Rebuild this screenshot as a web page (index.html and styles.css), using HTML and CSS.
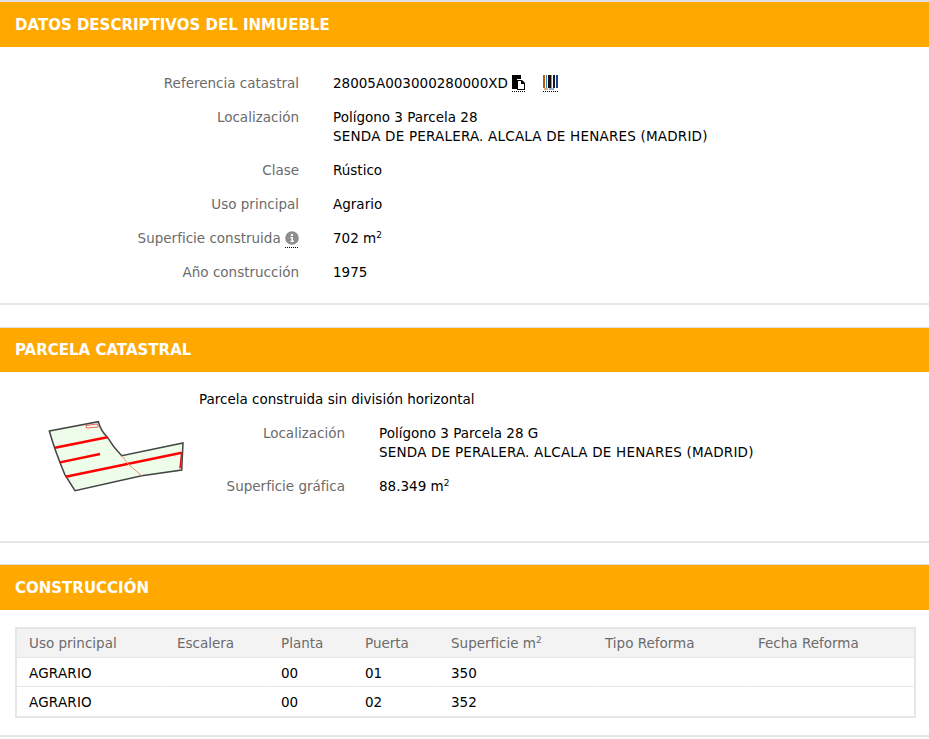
FILE: index.html
```html
<!DOCTYPE html>
<html lang="es">
<head>
    <meta charset="UTF-8">
    <title>Datos descriptivos del inmueble</title>
    <link rel="stylesheet" href="styles.css">
</head>
<body>
    <section class="panel panel-datos">
        <h2 class="panel-title">DATOS DESCRIPTIVOS DEL INMUEBLE</h2>
        <div class="datos-body">
            <div class="row">
                <div class="label">Referencia catastral</div>
                <div class="value">28005A003000280000XD<span class="ref-icons">
                    <svg width="15" height="19" viewBox="0 0 15 19">
                        <path d="M1 1h9v4H6v10H1z" fill="#000"/>
                        <path d="M6 6h5l3 3v7H6z" fill="#000"/>
                        <path d="M7 7h3v3h3v5H7z" fill="#fff"/>
                        <path d="M1 17.5h14" stroke="#000" stroke-dasharray="1 1"/>
                    </svg>
                    <svg width="15" height="19" viewBox="0 0 15 19">
                        <path d="M0 1h2v13H0z" fill="#b85a00"/>
                        <path d="M3 1h1v13H3z" fill="#2a7fd0"/>
                        <path d="M5 1h3v13H5z" fill="#1a1010"/>
                        <path d="M8 1h1v13H8z" fill="#d88a1e"/>
                        <path d="M10 1h2v13h-2z" fill="#10182a"/>
                        <path d="M13 1h2v13h-2z" fill="#1a3f90"/>
                        <path d="M1 15h4" stroke="#b85a00"/>
                        <path d="M6 15h5" stroke="#2a5fa0"/>
                        <path d="M0 17.5h15" stroke="#000" stroke-dasharray="1 1"/>
                    </svg>
                </span></div>
            </div>
            <div class="row">
                <div class="label">Localización</div>
                <div class="value">Polígono 3 Parcela 28<br><span class="caps">SENDA DE PERALERA. ALCALA DE HENARES (MADRID)</span></div>
            </div>
            <div class="row">
                <div class="label">Clase</div>
                <div class="value">Rústico</div>
            </div>
            <div class="row">
                <div class="label">Uso principal</div>
                <div class="value">Agrario</div>
            </div>
            <div class="row">
                <div class="label">Superficie construida <svg class="info" width="14" height="19" viewBox="0 0 14 19">
                    <circle cx="7" cy="9" r="6.8" fill="#8e8e8e"/>
                    <path d="M6 5h2v2H6zM5.5 8H8v3.5h1V13H5.5v-1.500h1V9.500h-1z" fill="#fff"/>
                    <path d="M0 18.500h14" stroke="#000" stroke-dasharray="1 1"/>
                </svg></div>
                <div class="value">702 m<sup>2</sup></div>
            </div>
            <div class="row">
                <div class="label">Año construcción</div>
                <div class="value">1975</div>
            </div>
        </div>
    </section>

    <section class="panel panel-parcela">
        <h2 class="panel-title">PARCELA CATASTRAL</h2>
        <div class="parcela-body">
            <svg class="plano" width="140" height="76" viewBox="0 0 140 76">
                <path d="M2.300 12 51.300 2.700 Q54 12 60 17.700 Q66 28 74.700 36.700 L136 24 134.700 51 94.700 56.700 28 71.700 18 56 Q8 32 2.300 12z" fill="#eefde9" stroke="#444" stroke-width="1.500"/>
                <path d="M8 28.700 60.300 18.300M13 43.300 53 35M18.700 57.700 134.700 33.700" stroke="#f00" stroke-width="2.400" fill="none"/>
                <path d="M74.700 36.700 81 45 94.700 56.700" stroke="#f08a80" fill="none"/>
                <path d="M134.700 33.700 133 49.300" stroke="#e01010" stroke-width="1.500" fill="none"/>
                <path d="M39 6.500 50.500 5 51.300 8 39.500 9z" fill="none" stroke="#f06060"/>
            </svg>
            <div class="parcela-info">
                <p class="parcela-tipo">Parcela construida sin división horizontal</p>
                <div class="row">
                    <div class="label">Localización</div>
                    <div class="value">Polígono 3 Parcela 28 G<br><span class="caps">SENDA DE PERALERA. ALCALA DE HENARES (MADRID)</span></div>
                </div>
                <div class="row">
                    <div class="label">Superficie gráfica</div>
                    <div class="value">88.349 m<sup>2</sup></div>
                </div>
            </div>
        </div>
    </section>

    <section class="panel panel-construccion">
        <h2 class="panel-title">CONSTRUCCIÓN</h2>
        <div class="construccion-body">
            <table class="tabla">
                <thead>
                    <tr>
                        <th class="c-uso">Uso principal</th>
                        <th class="c-esc">Escalera</th>
                        <th class="c-pla">Planta</th>
                        <th class="c-pue">Puerta</th>
                        <th class="c-sup">Superficie m<sup>2</sup></th>
                        <th class="c-tip">Tipo Reforma</th>
                        <th>Fecha Reforma</th>
                    </tr>
                </thead>
                <tbody>
                    <tr><td class="caps">AGRARIO</td><td></td><td>00</td><td>01</td><td>350</td><td></td><td></td></tr>
                    <tr><td class="caps">AGRARIO</td><td></td><td>00</td><td>02</td><td>352</td><td></td><td></td></tr>
                </tbody>
            </table>
        </div>
    </section>
</body>
</html>
```

FILE: styles.css
```css
body {
    margin: 0;
    background: #fff;
    color: #000;
    font-family: "DejaVu Sans", Verdana, sans-serif;
    font-size: 13.5px;
    line-height: 19px;
    overflow: hidden;
}
.panel {
    border-bottom: 2px solid #e6e6e6;
}
.panel-datos {
    margin-bottom: 22px;
}
.panel-parcela {
    margin-bottom: 21px;
}
.panel-title {
    margin: 0;
    height: 45px;
    padding-left: 15px;
    border-top: 1px solid #e0e0e0;
    background: #ffa800;
    color: #fff;
    font-size: 15px;
    font-weight: bold;
    line-height: 47px;
}
.panel-datos .panel-title {
    border-top-width: 2px;
}
.panel-parcela .panel-title {
    height: 44px;
    line-height: 44px;
}
.row {
    display: flex;
    margin-bottom: 15px;
}
.label {
    text-align: right;
    color: #6b6b6b;
}
.value {
    margin-left: 34px;
}
.caps {
    letter-spacing: 0.2px;
}
sup {
    font-size: 9px;
    line-height: 0;
}
.datos-body {
    padding: 27px 0 6px;
}
.datos-body .label {
    width: 299px;
}
.ref-icons {
    display: inline-flex;
    vertical-align: top;
    gap: 17px;
    margin-left: 3px;
}
.info {
    vertical-align: top;
}
.parcela-body {
    display: flex;
    padding: 18px 0 30px;
}
.plano {
    margin: 29px 0 0 47px;
    flex-shrink: 0;
}
.parcela-info {
    margin-left: 12px;
}
.parcela-tipo {
    margin: 0 0 15px;
}
.parcela-info .label {
    width: 146px;
}
.construccion-body {
    padding: 17px 13px 17px 15px;
}
.tabla {
    width: 100%;
    border: 2px solid #e6e6e6;
    border-collapse: separate;
    border-spacing: 0;
}
.tabla th,
.tabla td {
    padding: 5px 12px 4px;
    border-bottom: 1px solid #e6e6e6;
    border-right: 1px solid #fff;
    text-align: left;
}
.tabla td {
    padding: 6px 12px 3px;
}
.tabla th {
    background: #f3f3f3;
    border-right-color: #f3f3f3;
    color: #6b6b6b;
    font-weight: normal;
}
.tabla tbody tr:last-child td {
    padding-bottom: 4px;
    border-bottom: 0;
}
.c-uso { width: 123px; }
.c-esc { width: 79px; }
.c-pla { width: 59px; }
.c-pue { width: 61px; }
.c-sup { width: 129px; }
.c-tip { width: 128px; }
```
